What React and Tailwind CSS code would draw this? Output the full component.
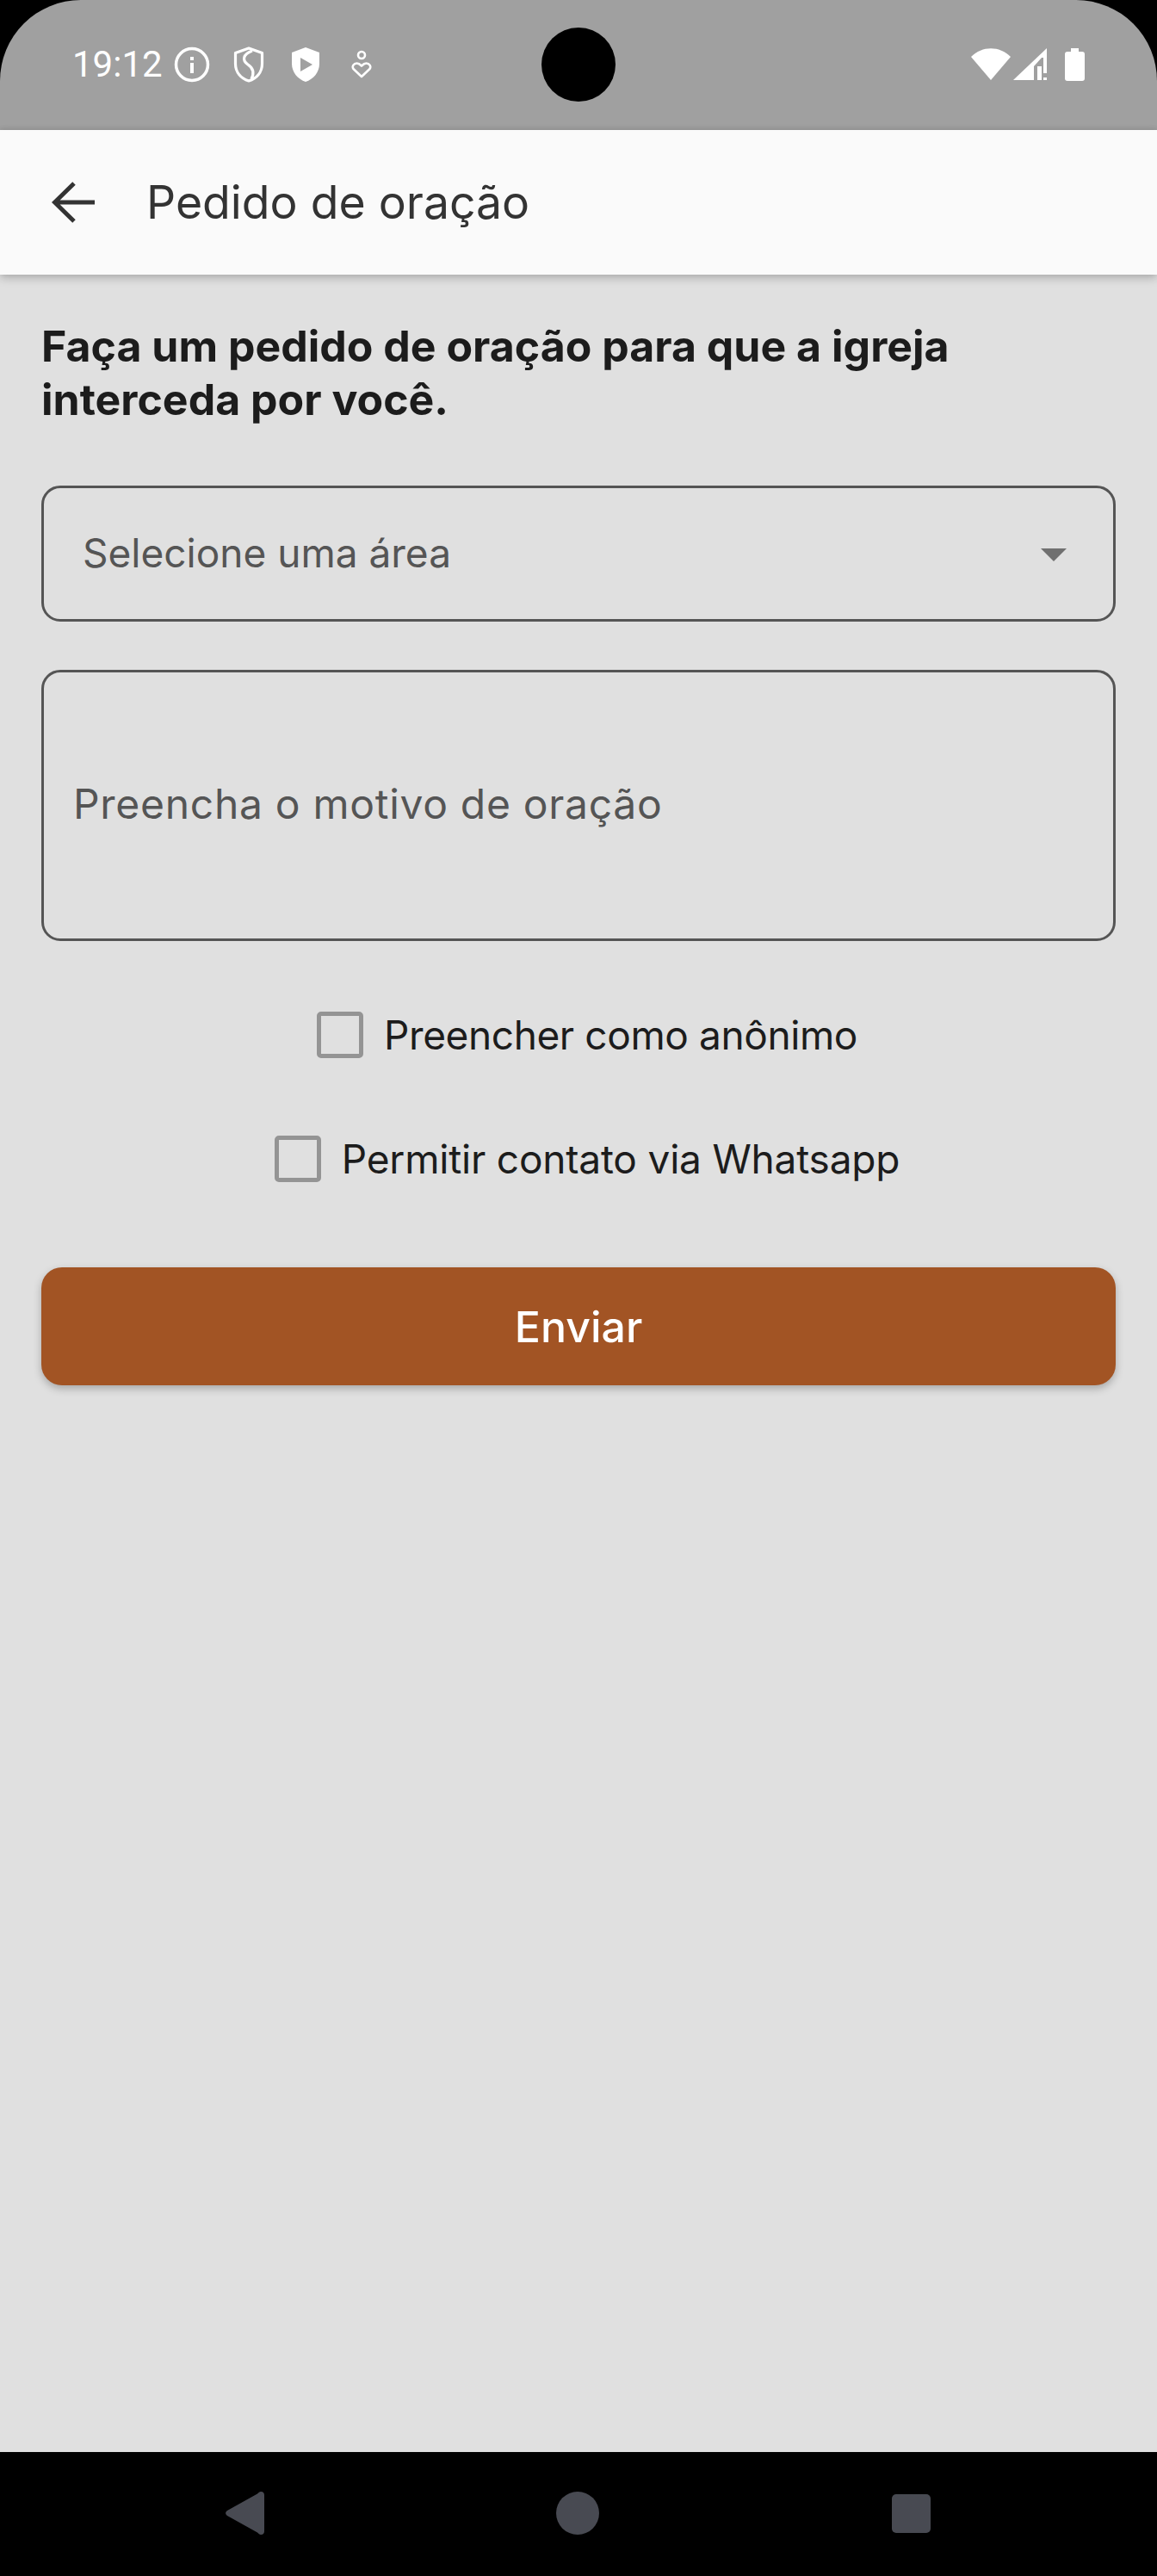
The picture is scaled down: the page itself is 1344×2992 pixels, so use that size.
const sans = "font-['Inter','Liberation_Sans',sans-serif]";

function InfoIcon() {
  return (
    <svg width="42" height="42" viewBox="0 0 42 42" fill="none" className="shrink-0">
      <circle cx="21" cy="21" r="18.5" stroke="#fff" strokeWidth="3.5" />
      <rect x="19" y="19" width="4" height="12" fill="#fff" />
      <rect x="19" y="12" width="4" height="4" fill="#fff" />
    </svg>
  );
}

function ShieldOutline() {
  return (
    <svg width="36" height="42" viewBox="0 0 36 42" fill="none" className="shrink-0">
      <path d="M18 2 L33.5 7.5 V20 C33.5 30 27 37 18 40 C9 37 2.5 30 2.5 20 V7.5 Z" stroke="#fff" strokeWidth="3.2" strokeLinejoin="round" />
      <path d="M22 5 C11 9 10 16 17 21 C23 25 25 30 21 38" stroke="#fff" strokeWidth="3.2" />
    </svg>
  );
}

function ShieldPlay() {
  return (
    <svg width="36" height="42" viewBox="0 0 36 42" className="shrink-0">
      <path d="M18 1 L34 7 V20 C34 30 27 38 18 41 C9 38 2 30 2 20 V7 Z" fill="#fff" />
      <path d="M12 13 L26 21 L12 29 Z" fill="#a0a0a0" />
    </svg>
  );
}

function PersonHeart() {
  return (
    <svg width="24" height="34" viewBox="0 0 24 34" fill="none" className="shrink-0">
      <circle cx="12" cy="6" r="4" stroke="#fff" strokeWidth="2.6" />
      <path d="M12 31 L2.5 22 C0.5 19 3 15.5 6.5 15.5 C9 15.5 10.5 17 12 18.5 C13.5 17 15 15.5 17.5 15.5 C21 15.5 23.5 19 21.5 22 Z" stroke="#fff" strokeWidth="2.6" strokeLinejoin="round" />
    </svg>
  );
}

function WifiIcon() {
  return (
    <svg width="46" height="37" viewBox="0 0 46 37" className="shrink-0">
      <path d="M23 37 L0 10 C13 -3 33 -3 46 10 Z" fill="#fff" />
    </svg>
  );
}

function SignalIcon() {
  return (
    <svg width="39" height="37" viewBox="0 0 39 37" className="shrink-0">
      <path d="M0 37 L39 0 V37 Z" fill="#fff" />
      <path d="M24 37 V21 L33 11 H35 V37 Z" fill="#a0a0a0" />
      <rect x="28" y="21" width="5" height="16" fill="#fff" />
      <rect x="35" y="15" width="4" height="14" fill="#fff" />
      <rect x="35" y="29" width="4" height="5" fill="#a0a0a0" />
    </svg>
  );
}

function BatteryIcon() {
  return (
    <svg width="23" height="38" viewBox="0 0 23 38" className="shrink-0">
      <path d="M7 0 H16 V4 H20 A3 3 0 0 1 23 7 V35 A3 3 0 0 1 20 38 H3 A3 3 0 0 1 0 35 V7 A3 3 0 0 1 3 4 H7 Z" fill="#fff" />
    </svg>
  );
}

function StatusBar() {
  return (
    <div className="bg-black">
      <div className="relative h-[151px] bg-[#a0a0a0] rounded-t-[94px] flex items-center pl-[84px] pr-[84px] pb-[2px]">
        <span className="font-['Roboto',sans-serif] text-[42px] leading-none text-white mr-[13px]">19:12</span>
        <InfoIcon />
        <div className="w-[27px]" />
        <ShieldOutline />
        <div className="w-[30px]" />
        <ShieldPlay />
        <div className="w-[35px]" />
        <PersonHeart />
        <div className="flex-1" />
        <WifiIcon />
        <div className="w-[3px]" />
        <SignalIcon />
        <div className="w-[21px]" />
        <BatteryIcon />
        <div className="absolute left-[629px] top-[32px] w-[86px] h-[86px] rounded-full bg-black" />
      </div>
    </div>
  );
}

function AppBar() {
  return (
    <div className="relative z-10 h-[168px] bg-[#fafafa] flex items-center pl-[60px] shadow-[0_4px_10px_rgba(0,0,0,0.22),0_-1px_6px_rgba(0,0,0,0.08)]">
      <svg width="50" height="48" viewBox="0 0 50 48" fill="none" className="shrink-0">
        <path d="M50 24 H4 M26 2 L3.5 24 L26 46" stroke="#333" strokeWidth="5" />
      </svg>
      <h1 className={`${sans} ml-[60px] text-[53.5px] leading-none text-[#333]`}>Pedido de oração</h1>
    </div>
  );
}

function Check({ label, className, tracking }) {
  return (
    <label className={`flex items-center justify-center pl-[20px] ${className}`}>
      <span className="w-[54px] h-[54px] border-[5px] border-[#949494] rounded-[5px] shrink-0" />
      <span className={`${sans} ml-[24px] text-[46px] leading-none text-[#1c1c1c] ${tracking}`}>{label}</span>
    </label>
  );
}

export default function App() {
  return (
    <div className="h-[2992px] w-[1344px] flex flex-col bg-[#e0e0e0] overflow-hidden">
      <StatusBar />
      <AppBar />
      <main className="flex-1 px-[48px] pt-[52px]">
        <h2 className={`${sans} font-bold text-[50px] leading-[62px] text-[#1c1c1c]`}>
          Faça um pedido de oração para que a igreja interceda por você.
        </h2>
        <div className="mt-[69px] h-[158px] border-[3px] border-[#555] rounded-[22px] flex items-center justify-between pl-[45px] pr-[54px]">
          <span className={`${sans} text-[46px] leading-none text-[#555] pb-[3px]`}>Selecione uma área</span>
          <span className="w-0 h-0 border-x-[15px] border-x-transparent border-t-[15px] border-t-[#707070] mt-[2px]" />
        </div>
        <div className="mt-[56px] h-[315px] border-[3px] border-[#555] rounded-[22px] flex items-center pl-[34px]">
          <span className={`${sans} text-[48px] leading-none tracking-[0.7px] text-[#555] pb-[3px]`}>Preencha o motivo de oração</span>
        </div>
        <Check label="Preencher como anônimo" className="mt-[82px]" tracking="tracking-[-0.4px]" />
        <Check label="Permitir contato via Whatsapp" className="mt-[90px]" tracking="tracking-[-0.2px]" />
        <button className={`${sans} mt-[99px] w-full h-[137px] rounded-[24px] bg-[#a25424] text-white text-[50px] leading-none font-medium shadow-[0_4px_10px_rgba(0,0,0,0.25)]`}>
          Enviar
        </button>
      </main>
      <nav className="h-[144px] bg-black flex items-center pb-[2px] pl-[262px]">
        <svg width="45" height="50" viewBox="0 0 45 50" className="shrink-0">
          <path d="M41 0 C44 0 45 2 45 4 V46 C45 48 44 50 41 50 C39.5 50 38.5 49 37 47.5 L2 28 C-0.5 26 -0.5 24 2 22 L37 2.5 C38.5 1 39.5 0 41 0 Z" fill="#484a52" />
        </svg>
        <div className="ml-[339px] w-[50px] h-[50px] rounded-full bg-[#484a52]" />
        <div className="ml-[340px] w-[45px] h-[45px] rounded-[5px] bg-[#484a52]" />
      </nav>
    </div>
  );
}
